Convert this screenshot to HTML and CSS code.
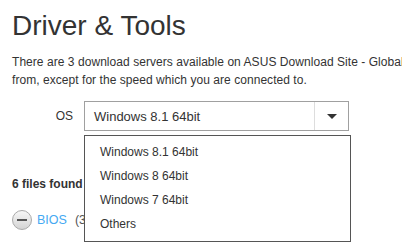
FILE: index.html
```html
<!DOCTYPE html>
<html lang="en">
<head>
    <meta charset="UTF-8">
    <title>Driver &amp; Tools</title>
    <link rel="stylesheet" href="styles.css">
</head>
<body>
    <div class="page">
        <h1 class="title">Driver &amp; Tools</h1>
        <p class="intro">There are 3 download servers available on ASUS Download Site - Global, China and Mirror. You can download the file<br>from, except for the speed which you are connected to.</p>

        <div class="os-row">
            <span class="os-label">OS</span>
            <div class="select-wrap">
                <div class="select">
                    <span class="select-value">Windows 8.1 64bit</span>
                    <span class="select-btn"><span class="caret"></span></span>
                </div>
                <ul class="menu">
                    <li>Windows 8.1 64bit</li>
                    <li>Windows 8 64bit</li>
                    <li>Windows 7 64bit</li>
                    <li>Others</li>
                </ul>
            </div>
        </div>

        <div class="found">6 files found</div>
        <div class="cat">
            <span class="toggle"><span class="bar"></span></span>
            <a class="cat-link" href="#">BIOS</a>
            <span class="cat-count">(3)</span>
        </div>
    </div>
</body>
</html>
```

FILE: styles.css
```css
html {
    overflow: hidden;
}
body {
    margin: 0;
    font-family: "Liberation Sans", Arial, sans-serif;
    color: #333;
    background: #fff;
}
.page {
    padding: 0 12px 20px;
    width: 900px;
}
.title {
    font-size: 28px;
    font-weight: normal;
    margin: 0;
    padding-top: 10px;
    line-height: 32px;
}
.intro {
    font-size: 12px;
    letter-spacing: 0.05px;
    line-height: 18px;
    margin: 11px 0 0;
    white-space: nowrap;
}
.os-row {
    display: flex;
    align-items: flex-start;
    margin-top: 12px;
}
.os-label {
    font-size: 12px;
    width: 61px;
    text-align: right;
    padding-right: 11px;
    line-height: 30px;
}
.select-wrap {
    position: relative;
}
.select {
    width: 263px;
    height: 28px;
    border: 1px solid #a0a0a0;
    display: flex;
    align-items: center;
}
.select-value {
    flex: 1;
    font-size: 13px;
    padding-left: 9px;
}
.select-btn {
    width: 33px;
    height: 28px;
    border-left: 1px solid #ddd;
    display: flex;
    align-items: center;
    justify-content: center;
}
.caret {
    width: 0;
    height: 0;
    border-left: 5px solid transparent;
    border-right: 5px solid transparent;
    border-top: 5px solid #333;
}
.menu {
    position: absolute;
    left: 0;
    top: 34px;
    width: 265px;
    margin: 0;
    padding: 4px 0 5px;
    list-style: none;
    background: #fff;
    border: 1px solid #555;
    z-index: 2;
}
.menu li {
    font-size: 12px;
    line-height: 24px;
    padding-left: 15px;
}
.found {
    font-size: 12px;
    font-weight: bold;
    line-height: 18px;
    margin-top: 44px;
}
.cat {
    display: flex;
    align-items: center;
    margin-top: 17px;
    font-size: 12.5px;
}
.toggle {
    box-sizing: border-box;
    width: 20px;
    height: 20px;
    border-radius: 50%;
    border: 1px solid #aaa;
    background: linear-gradient(#f7f7f7, #d4d4d4);
    display: flex;
    align-items: center;
    justify-content: center;
}
.bar {
    width: 10px;
    height: 2px;
    background: #555;
}
.cat-link {
    color: #45a9f2;
    text-decoration: none;
    margin-left: 5px;
}
.cat-count {
    margin-left: 8px;
    color: #555;
}
```
